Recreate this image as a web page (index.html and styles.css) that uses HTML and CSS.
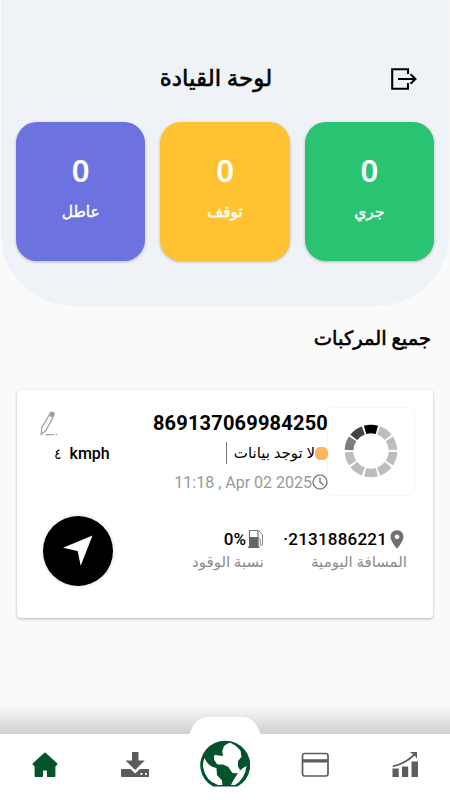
FILE: index.html
```html
<!DOCTYPE html>
<html lang="ar" dir="rtl">
  <head>
    <meta charset="UTF-8" />
    <meta name="viewport" content="width=device-width, initial-scale=1.0" />
    <title>لوحة القيادة</title>
    <link rel="stylesheet" href="styles.css">
  </head>
  <body>
    <header class="top">
      <div class="title-bar">
        <svg class="logout" viewBox="0 0 26 22">
          <path d="M17 6V1.2H1.2v19.6H17V15" fill="none" stroke="#000" stroke-width="2.1" />
          <path d="M7 11h17M19.5 6.2l5 4.8-5 4.8" fill="none" stroke="#000" stroke-width="2" />
        </svg>
        <h1>لوحة القيادة</h1>
      </div>
      <div class="stats">
        <div class="stat green">
          <b>0</b>
          <span>جري</span>
        </div>
        <div class="stat yellow">
          <b>0</b>
          <span>توقف</span>
        </div>
        <div class="stat purple">
          <b>0</b>
          <span>عاطل</span>
        </div>
      </div>
    </header>

    <main>
      <h2>جميع المركبات</h2>
      <div class="card">
        <div class="vehicle">
          <div class="photo">
            <svg viewBox="-27 -27 54 54" fill="none" stroke-width="8.6">
              <circle r="22" pathLength="100" stroke="#bdbdbd" stroke-dasharray="8.6 1.4" transform="rotate(-105.5)" />
              <circle r="22" pathLength="100" stroke="#000" stroke-dasharray="8.6 91.4" transform="rotate(-105.5)" />
              <circle r="22" pathLength="100" stroke="#444" stroke-dasharray="8.6 91.4" transform="rotate(-141.5)" />
              <circle r="22" pathLength="100" stroke="#7b7b7b" stroke-dasharray="8.6 91.4" transform="rotate(-177.5)" />
            </svg>
          </div>
          <div class="info">
            <div class="imei">869137069984250</div>
            <div class="status">
              <i class="dot"></i>
              <span>لا توجد بيانات</span>
            </div>
            <div class="date">
              <svg viewBox="0 0 16 16" fill="none" stroke="#666" stroke-width="1.2">
                <circle cx="8" cy="8" r="7" />
                <path d="M8 3.5V8l3.5 3" />
              </svg>
              <span dir="ltr">11:18 , Apr 02 2025</span>
            </div>
          </div>
          <div class="side">
            <svg class="pencil" viewBox="0 0 18 26" fill="none" stroke="#a3a3a3" stroke-width="1.3">
              <path d="M1.2 23.5l.6-7L9.3 3.8l4 2.3L5.8 19.5z" />
              <path d="M5.5 23.6h8.5M16 23.6h1.2" />
              <circle cx="12" cy="3.3" r="2.1" fill="#999" />
            </svg>
            <div class="speed" dir="ltr"><span class="num">٤</span><span>kmph</span></div>
          </div>
        </div>
        <div class="details">
          <div class="detail distance">
            <div class="value">
              <svg class="pin" viewBox="0 0 14 19">
                <path fill="#707070" fill-rule="evenodd" d="M7 .3C3.2.3.5 3.2.5 6.8.5 11.5 7 18.7 7 18.7s6.5-7.2 6.5-11.9C13.5 3.2 10.8.3 7 .3zM7 4.4a2.4 2.4 0 1 1 0 4.8 2.4 2.4 0 0 1 0-4.8z" />
              </svg>
              <span dir="ltr">·2131886221</span>
            </div>
            <p>المسافة اليومية</p>
          </div>
          <div class="detail fuel">
            <div class="value">
              <svg class="pump" viewBox="0 0 16 20">
                <path d="M1.5 9V1.5h8.5V9" fill="none" stroke="#777" stroke-width="1.2" />
                <path d="M1 8h9.6v9.5H11.5V19H0v-1.5h1z" fill="#666" />
                <path d="M11 2l3.5 3.5V15q-.1 1.8-1.3 1.5-1-.2-.9-1.5v-4q0-1.2-1.5-1.2" fill="none" stroke="#888" stroke-width="1" />
              </svg>
              <span dir="ltr">0%</span>
            </div>
            <p>نسبة الوقود</p>
          </div>
          <div class="navigate">
            <svg viewBox="0 0 70 70">
              <path d="M49.5 19.5L20 31.8l14.6 3.2 3.1 14.8z" fill="#fff" />
            </svg>
          </div>
        </div>
      </div>
    </main>

    <nav>
      <div class="shade"></div>
      <div class="tabs">
        <a>
          <svg width="28" height="28" viewBox="0 0 28 28">
            <path d="M1.5 26h6.2v-8.5H1.5zM11 26h6.2V15.5H11zM20.5 26h6.5V10.5h-6.5z" fill="#5c5c5c" />
            <path d="M1.8 15.3Q14 13 24 3" fill="none" stroke="#5c5c5c" stroke-width="1.8" />
            <path d="M18.8 1h7.2v6.8l-2-2.8-2.2-2z" fill="#5c5c5c" />
          </svg>
        </a>
        <a>
          <svg width="28" height="28" viewBox="0 0 28 28">
            <rect x="1.5" y="2.5" width="25.5" height="22.5" rx="2.2" fill="none" stroke="#5c5c5c" stroke-width="1.7" />
            <path d="M1.5 8.2h25.5v3.3H1.5z" fill="#5c5c5c" />
          </svg>
        </a>
        <a class="globe">
          <svg width="50" height="48" viewBox="0 0 50 48">
            <path d="M13 47.5A25 24.5 0 1 1 37.5 47.5z" fill="#04532d" />
            <path d="M24.5 7Q28 4.5 30.5 4.3 36 6.5 40 11.5L41 18 37.5 22V27.5Q40 30 39.5 34L32.5 33.5 28.5 27.5 23 25 17.5 25 14.8 21 14.5 16.5 23.5 17.5 22.8 12z" fill="#fff" stroke="#fff" stroke-width="1" stroke-linejoin="round" />
            <path d="M4.5 19Q8 27.5 16.5 29L17 36 22 41.5 22.3 46H18Q5.5 42 3 28 2.7 23 4.5 19zM46.5 27Q39 31 37.5 35L33.5 41 31 46H35Q45 40 46.5 27z" fill="#fff" />
          </svg>
        </a>
        <a>
          <svg width="28" height="28" viewBox="0 0 28 28">
            <path d="M11 1h6.5v8.5h6.3L14.2 19 4.5 9.5H11z" fill="#5c5c5c" />
            <path d="M1 18h8.5l4.7 4.5L19 18h8.5q.8 0 .8.8v6.4q0 .8-.8.8H1q-1 0-1-.8v-6.4Q0 18 1 18z" fill="#5c5c5c" />
            <path d="M19.5 23h1.8M24 23h1.8" stroke="#fff" stroke-width="1.8" />
          </svg>
        </a>
        <a>
          <svg width="28" height="28" viewBox="0 0 28 28">
            <path d="M14 2.5L25.5 13 24 14.5 4 14.5 2.5 13zM4.5 13h19v12h-6.7v-6.3h-5.6V25H4.5z" fill="#04532d" stroke="#04532d" stroke-width="1.8" stroke-linejoin="round" />
          </svg>
        </a>
      </div>
    </nav>
  </body>
</html>
```
FILE: styles.css
```css
* {
  margin: 0;
  padding: 0;
  box-sizing: border-box;
}

body {
  width: 450px;
  height: 800px;
  overflow: hidden;
  display: flex;
  flex-direction: column;
  background-color: #fafafa;
  font-family: Roboto, "DejaVu Sans", sans-serif;
  color: #000;
}

svg {
  display: block;
  flex-shrink: 0;
}

.top {
  height: 306px;
  padding: 58px 15px 0;
  margin: 0 1px;
  background-color: #eff3f8;
  border-radius: 0 0 72px 72px;
}

.title-bar {
  display: grid;
  grid-template-columns: 62px 1fr 44px;
  align-items: center;
  height: 42px;
}

.logout {
  width: 26px;
  height: 22px;
  margin-right: 17px;
}

h1,
h2 {
  font-weight: normal;
  -webkit-text-stroke: 0.6px black;
}

h1 {
  text-align: center;
  font-size: 23px;
  line-height: 42px;
}

.stats {
  display: flex;
  gap: 15px;
  margin-top: 22px;
}

.stat {
  flex: 1;
  height: 139px;
  padding-top: 32px;
  display: flex;
  flex-direction: column;
  align-items: center;
  color: white;
  border-radius: 21px;
  box-shadow: 0 1px 3px rgba(0, 0, 0, 0.25);
}

.stat b {
  font-family: "Noto Sans", sans-serif;
  font-size: 31px;
  font-weight: 600;
  line-height: 32px;
}

.stat span {
  margin-top: 13px;
  font-size: 15.5px;
  line-height: 26px;
  -webkit-text-stroke: 0.4px white;
}

.green {
  background-color: #2ac372;
}

.yellow {
  background-color: #ffc331;
}

.purple {
  background-color: #6c72df;
}

main {
  flex: 1;
  padding: 14px 17px 0;
}

h2 {
  font-size: 19.5px;
  line-height: 38px;
  padding-right: 2px;
}

.card {
  height: 228px;
  margin-top: 32px;
  padding: 18px 19px 0 23px;
  background-color: white;
  border-radius: 4px;
  box-shadow: 0 1px 3px rgba(0, 0, 0, 0.28);
}

.vehicle {
  display: flex;
  height: 88px;
}

.photo {
  width: 86px;
  height: 87px;
  padding: 16px;
  border-radius: 4px;
  box-shadow: 0 0 2px rgba(0, 0, 0, 0.12);
}

.photo svg {
  width: 54px;
  height: 54px;
}

.info {
  width: 190px;
}

.imei {
  font-size: 20px;
  font-weight: bold;
  line-height: 30px;
  letter-spacing: 0.2px;
}

.status {
  display: flex;
  align-items: center;
  height: 30px;
  font-size: 15px;
}

.status span {
  padding-left: 7px;
  line-height: 22px;
  border-left: 1px solid #777;
}

.dot {
  width: 13px;
  height: 13px;
  border-radius: 5px;
  background-color: #fcb65f;
}

.date {
  display: flex;
  align-items: center;
  height: 28px;
  font-size: 16px;
  color: #999;
}

.date svg {
  width: 16px;
  height: 16px;
}

.side {
  flex: 1;
}

.pencil {
  width: 18px;
  height: 26px;
  margin: 3px auto 0 0;
}

.speed {
  display: flex;
  gap: 8px;
  padding-left: 14px;
  margin-top: 5px;
  font-size: 16px;
  font-weight: 500;
  line-height: 24px;
  white-space: nowrap;
}

.num {
  font-size: 14px;
}

.details {
  display: flex;
  padding: 20px 7px 0 3px;
}

.detail {
  padding-top: 13px;
}

.distance {
  width: 143px;
}

.fuel {
  width: 150px;
}

.value {
  display: flex;
  align-items: center;
  height: 20px;
  font-size: 17px;
  font-weight: 500;
}

.distance .value {
  letter-spacing: 0.2px;
}

.pin {
  width: 14px;
  height: 19px;
  margin: 0 3px;
}

.pump {
  width: 16px;
  height: 20px;
  margin-left: 2px;
}

.detail p {
  font-size: 15px;
  line-height: 26px;
  color: #8c8c8c;
}

.navigate {
  width: 70px;
  height: 70px;
  margin-right: auto;
  border-radius: 50%;
  background-color: black;
  box-shadow: 0 0 4px rgba(0, 0, 0, 0.15);
}

nav {
  height: 94px;
}

.shade {
  height: 28px;
  background: linear-gradient(#f8f8f8, #e9e9e9 40%, #cfcfcf);
}

.tabs {
  display: flex;
  height: 66px;
  background-color: white;
}

.tabs a {
  flex: 1;
  display: flex;
  justify-content: center;
  padding-top: 17px;
  padding-right: 1px;
}

.tabs .globe {
  padding-top: 5px;
  position: relative;
}

.globe::before {
  content: "";
  position: absolute;
  top: -17px;
  left: 9px;
  width: 72px;
  height: 18px;
  background-color: white;
  clip-path: path("M0 18Q2 11 7 5Q12 0 19 0H53Q60 0 65 5Q70 11 72 18Z");
}

.globe svg {
  position: relative;
}
```
